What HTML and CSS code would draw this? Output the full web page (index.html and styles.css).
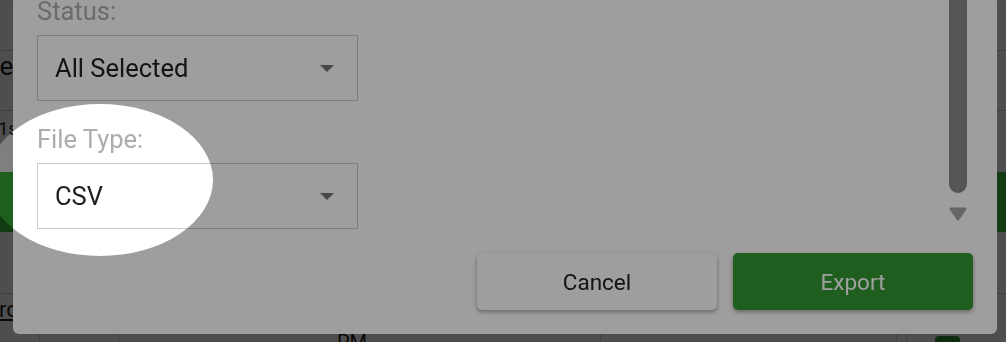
FILE: index.html
```html
<!DOCTYPE html>
<html lang="en">
<head>
<meta charset="utf-8">
<title>Export</title>
<link rel="stylesheet" href="styles.css">
</head>
<body>
<div class="page">
  <div class="row r1"></div>
  <div class="row r2"><span class="cut cut-type">Type</span></div>
  <div class="row r3">
    <div class="r3-text"><span class="cut cut-date">Oct 21st</span></div>
    <div class="greenbar"></div>
  </div>
  <div class="row r4">
    <div class="cell c1"><a class="cut cut-link" href="#">Error</a></div>
    <div class="cell c2"></div>
    <div class="cell c3">10/15/2023 3:45<br>PM</div>
    <div class="cell c4"></div>
    <div class="cell c5"></div>
    <div class="cell c6"><span class="chip"></span></div>
  </div>
</div>

<div class="backdrop"></div>

<div class="modal">
  <div class="modal-body">
    <div class="form">
      <div class="field">
        <div class="field-label">Status:</div>
        <div class="select">
          <span>All Selected</span>
          <svg class="caret" width="14" height="7" viewBox="0 0 14 7"><polygon points="0,0 14,0 7,7"/></svg>
        </div>
      </div>
      <div class="field">
        <div class="field-label">File Type:</div>
        <div class="select">
          <span>CSV</span>
          <svg class="caret" width="14" height="7" viewBox="0 0 14 7"><polygon points="0,0 14,0 7,7"/></svg>
        </div>
      </div>
    </div>
    <div class="scrollbar">
      <div class="thumb"></div>
      <div class="sb-button">
        <svg width="18" height="14" viewBox="0 0 18 14"><polygon points="2,2 16,2 9,12" stroke-linejoin="round"/></svg>
      </div>
    </div>
  </div>
  <div class="modal-footer">
    <button class="btn btn-cancel">Cancel</button>
    <button class="btn btn-export">Export</button>
  </div>
</div>

<div class="spotlight"></div>
</body>
</html>
```

FILE: styles.css
```css
html, body {
  margin: 0;
  padding: 0;
}
body {
  width: 1006px;
  height: 342px;
  overflow: hidden;
  font-family: Roboto, "Noto Sans", Arial, sans-serif;
  color: #212121;
  background: #fff;
}

/* background page */
.page {
  height: 342px;
  overflow: hidden;
  background: #fff;
}
.row {
  border-bottom: 1px solid #cbcbcb;
  box-sizing: content-box;
  overflow: hidden;
  white-space: nowrap;
}
.r1 { height: 50px; }
.r2 { height: 59px; font-size: 26px; line-height: 30px; }
.r3 { height: 182px; }
.r3-text { padding-top: 6px; font-size: 18px; line-height: 24px; }
.cut { display: inline-block; }
.cut-type { margin-left: -42px; }
.cut-date { margin-left: -44px; }
.greenbar {
  margin-top: 31px;
  height: 60px;
  background: #3cbe3c;
}
.r4 {
  border-bottom: none;
  height: 60px;
  display: flex;
}
.cell {
  border-right: 1px solid #cbcbcb;
  height: 100%;
  box-sizing: border-box;
}
.c1 { width: 40px; padding-top: 4px; font-size: 22px; line-height: 24px; }
.cut-link { color: #212121; text-decoration: underline; margin-left: -21px; }
.c2 { width: 79px; }
.c3 { width: 482px; padding: 12px 15px 0 0; font-size: 20px; line-height: 24px; text-align: center; }
.c4 { width: 296px; }
.c5 { width: 10px; }
.c6 { flex: 1; border-right: none; padding: 42px 0 0 28px; }
.chip {
  display: block;
  width: 25px;
  height: 25px;
  border-radius: 4px;
  background: #2f8f2f;
}

/* modal backdrop */
.backdrop {
  position: fixed;
  inset: 0;
  background: rgba(0, 0, 0, 0.5);
}

/* dialog */
.modal {
  position: fixed;
  left: 13px;
  right: 9px;
  bottom: 8px;
  background: #fff;
  border-radius: 6px;
  padding: 0 24px 24px;
  display: flex;
  flex-direction: column;
}
.modal-body {
  height: 233px;
  display: flex;
  overflow: hidden;
}
.form {
  flex: 1;
  display: flex;
  flex-direction: column;
  gap: 23px;
}
.field-label {
  font-size: 25.5px;
  line-height: 30px;
  color: #acacac;
  margin-bottom: 9px;
}
.select {
  width: 321px;
  height: 66px;
  box-sizing: border-box;
  border: 1px solid #cbcbcb;
  display: flex;
  align-items: center;
  justify-content: space-between;
  padding: 0 23px 0 17px;
  font-size: 25.5px;
  color: #212121;
}
.caret { display: block; fill: #757575; }

.scrollbar {
  width: 30px;
  display: flex;
  flex-direction: column;
}
.thumb {
  flex: 1;
  margin: 0 6px 6px;
  background: #8a8a8a;
  border-radius: 0 0 9px 9px;
}
.sb-button {
  height: 30px;
  display: flex;
  align-items: center;
  justify-content: center;
}
.sb-button svg {
  display: block;
  fill: #a4a4a4;
  stroke: #a4a4a4;
  stroke-width: 3;
}

.modal-footer {
  margin-top: 24px;
  display: flex;
  justify-content: flex-end;
  gap: 16px;
}
.btn {
  width: 240px;
  height: 57px;
  border: none;
  border-radius: 5px;
  font-family: Roboto, "Noto Sans", Arial, sans-serif;
  font-size: 22.5px;
  cursor: pointer;
  box-shadow: 0 2px 4px rgba(0, 0, 0, 0.35);
}
.btn-cancel { background: #fff; color: #212121; }
.btn-export { background: #359834; color: #fff; }

/* spotlight highlight */
.spotlight {
  position: fixed;
  left: -13px;
  top: 104px;
  width: 226px;
  height: 152px;
  border-radius: 50%;
  box-shadow: 0 0 0 2000px rgba(0, 0, 0, 0.38);
  pointer-events: none;
}
```
